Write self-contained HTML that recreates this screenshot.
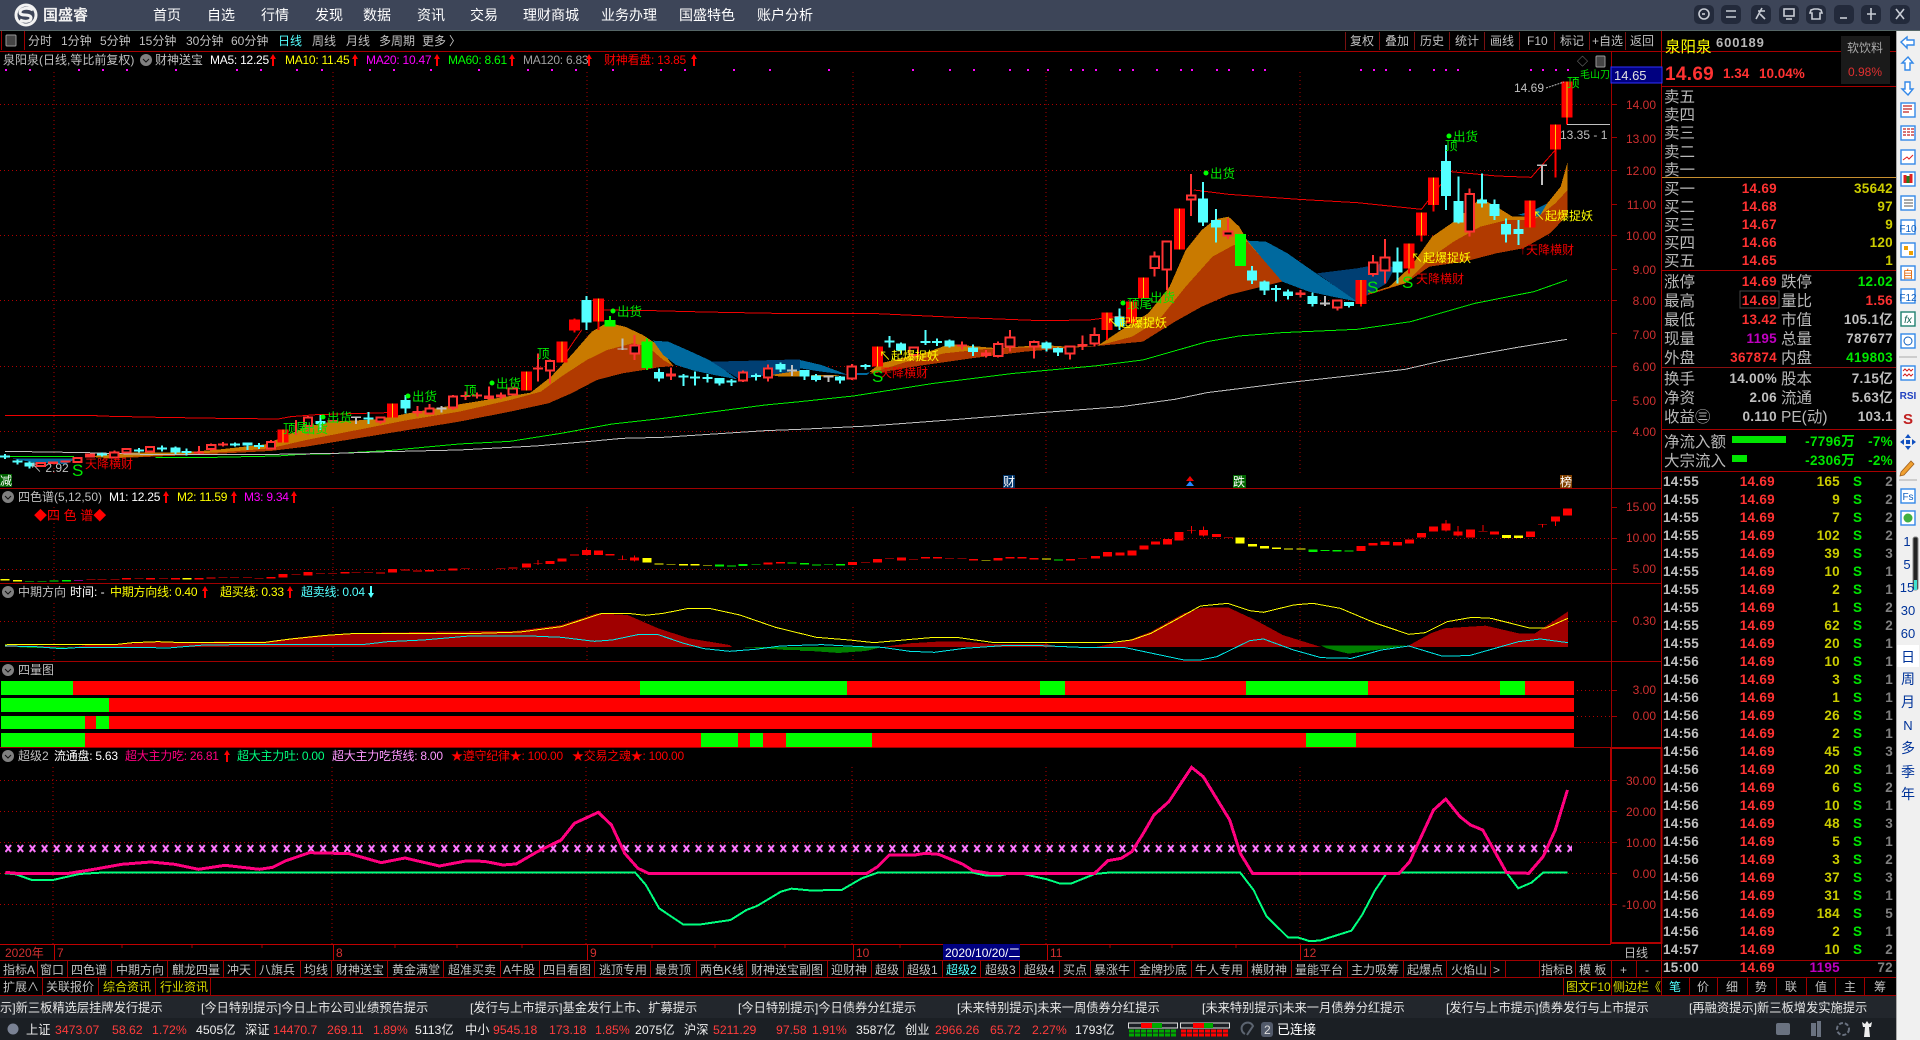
<!DOCTYPE html>
<html lang="zh"><head><meta charset="utf-8"><title>国盛睿</title>
<style>
html,body{margin:0;padding:0;background:#000;width:1920px;height:1040px;overflow:hidden}
svg{display:block;position:absolute;left:0;top:0}
text{font-family:"Liberation Sans","WenQuanYi Zen Hei","Noto Sans CJK SC",sans-serif;font-size:12px;fill:#c0c0c0;white-space:pre}
.n path,.n polyline,.n polygon{vector-effect:non-scaling-stroke;shape-rendering:crispEdges}
.b text{font-weight:bold;font-size:13.5px;letter-spacing:.3px}
.e{text-anchor:end}.m{text-anchor:middle}
.w{fill:#fff}.y{fill:#ffff00}.r{fill:#ff0000}.g{fill:#00ff00}.c{fill:#54ffff}.p{fill:#ff00ff}
.a{fill:#d03030}.la{letter-spacing:-.25px}
.nv text{font-size:14px;fill:#fff}
.l16 text{font-size:15.5px;fill:#b8b8b8;font-weight:normal}
.gl text{fill:#00e800;font-size:12.5px}.yl text{fill:#ffff00;font-size:12px}.rl text{fill:#f00000;font-size:12px}
.sb text{fill:#003399;font-size:14px;text-anchor:middle}
.tk text{fill:#e6e6e6;font-size:12.25px}
.st text{font-size:12.25px;fill:#ff3c3c}
.st .w{fill:#f0f0f0}
.b .pr,.pr{fill:#ff3232}.b .vo{fill:#cccc00}.b .gr{fill:#00e600}.b .mg{fill:#c000c0}.b .ct{fill:#808080}
.yt{fill:#d8d800}
</style></head><body>
<svg width="1920" height="1040" viewBox="0 0 1920 1040">
<defs>
<path id="au" d="M0 -6L-3 -1H-1V6H1V-1H3Z" fill="#ff0000"/>
<path id="ad" d="M0 6L-3 1H-1V-6H1V1H3Z" fill="#54ffff"/>
<pattern id="xp" x="5" y="844" width="12.11" height="9" patternUnits="userSpaceOnUse"><path d="M.5 1L6 8M6 1L.5 8" stroke="#ff77ff" stroke-width="2" fill="none"/></pattern>
</defs>
<rect width="1920" height="1040" fill="#000"/>
<!-- title bar -->
<rect width="1920" height="30" fill="#3d4558"/>
<rect y="30" width="1920" height="1" fill="#566"/>
<circle cx="26" cy="15" r="10" fill="none" stroke="#f2f2f2" stroke-width="3"/>
<path d="M33 10C28 7 20 8 20 12.5C20 17 31 13 31 18C31 22 24 22 20 20" fill="none" stroke="#f2f2f2" stroke-width="3"/>
<text x="43" y="20" style="font-size:15px;font-weight:bold;fill:#f0f0f0">国盛睿</text>
<g class="nv"><text x="153" y="20">首页</text><text x="207" y="20">自选</text><text x="261" y="20">行情</text><text x="315" y="20">发现</text><text x="363" y="20">数据</text><text x="417" y="20">资讯</text><text x="470" y="20">交易</text><text x="523" y="20">理财商城</text><text x="601" y="20">业务办理</text><text x="679" y="20">国盛特色</text><text x="757" y="20">账户分析</text></g>
<!-- window buttons -->
<g fill="#232a3b"><rect x="1694" y="5" width="20" height="19" rx="5"/><rect x="1721" y="5" width="20" height="19" rx="5"/><rect x="1751" y="5" width="20" height="19" rx="5"/><rect x="1779" y="5" width="20" height="19" rx="5"/><rect x="1806" y="5" width="20" height="19" rx="5"/><rect x="1834" y="5" width="20" height="19" rx="5"/><rect x="1861" y="5" width="20" height="19" rx="5"/><rect x="1890" y="5" width="20" height="19" rx="5"/></g>
<g fill="none" stroke="#c8ccd4" stroke-width="1.6"><circle cx="1704" cy="14" r="5"/><path d="M1702 14h3"/><path d="M1726 11h10M1726 17h10"/><path d="M1756 19l6-11M1758 11h7M1760 14l5 5"/><rect x="1784" y="9" width="10" height="7"/><path d="M1786 19h6"/><path d="M1811 10l3-1h4l3 1 1 3h-2v6h-8v-6h-2z"/><path d="M1840 18h7"/><path d="M1871 8v6h-4M1871 14h5M1871 14v6"/><path d="M1896 9l8 10M1904 9l-8 10"/></g>
<!-- toolbar -->
<path d="M1.5 31V50M24.5 31V50" stroke="#a00000"/>
<rect x="6" y="35" width="10" height="11" rx="1" fill="#444" stroke="#999"/>
<g><text x="28" y="45">分时</text><text x="61" y="45">1分钟</text><text x="100" y="45">5分钟</text><text x="139" y="45">15分钟</text><text x="186" y="45">30分钟</text><text x="231" y="45">60分钟</text><text x="278" y="45" class="c">日线</text><text x="312" y="45">周线</text><text x="346" y="45">月线</text><text x="379" y="45">多周期</text><text x="422" y="45">更多</text><text x="449" y="45">〉</text>
<text x="1350" y="45">复权</text><text x="1385" y="45">叠加</text><text x="1420" y="45">历史</text><text x="1455" y="45">统计</text><text x="1490" y="45">画线</text><text x="1527" y="45">F10</text><text x="1560" y="45">标记</text><text x="1592" y="45">+自选</text><text x="1630" y="45">返回</text></g>
<path d="M1345.5 32V50M1379.5 32V50M1414.5 32V50M1449.5 32V50M1484.5 32V50M1519.5 32V50M1554.5 32V50M1589.5 32V50M1625.5 32V50" stroke="#7a1010"/>
<path d="M0 51.5H1896M1661.5 31V978" stroke="#a80000"/>
<!-- info row -->
<text x="3" y="64">泉阳泉(日线,等比前复权)</text>
<circle cx="146" cy="60" r="6" fill="#808080"/><path d="M143 59l3 3 3-3" stroke="#111" fill="none"/>
<text x="155" y="64">财神送宝</text>
<text x="210" y="64" class="w la">MA5: 12.25</text><use href="#au" x="273" y="60"/>
<text x="285" y="64" class="y la">MA10: 11.45</text><use href="#au" x="355" y="60"/>
<text x="366" y="64" class="p la">MA20: 10.47</text><use href="#au" x="437" y="60"/>
<text x="448" y="64" class="g la">MA60: 8.61</text><use href="#au" x="512" y="60"/>
<text x="523" y="64" class="la" style="fill:#a0a0a0">MA120: 6.83</text><use href="#au" x="589" y="60"/>
<text x="604" y="64" class="r la">财神看盘: 13.85</text><use href="#au" x="694" y="60"/>
<text x="1577" y="65" style="fill:#888;font-size:11px">◇</text><rect x="1596" y="56" width="9" height="11" rx="1" fill="#444" stroke="#999"/>
<!-- magenta dots -->
<path d="M5 70h2M29 70h2M78 70h2M102 70h2M126 70h2M175 70h2M236 70h2M260 70h2M296 70h2M321 70h2M369 70h2M393 70h2M430 70h2M478 70h2M527 70h2M551 70h2M575 70h2M612 70h2M660 70h2M684 70h2M733 70h2M769 70h2M828 70h2M912 70h2M949 70h2M973 70h2M1009 70h2M1027 70h2M1047 70h2M1070 70h2M1082 70h2M1095 70h2M1119 70h2M1132 70h2M1156 70h2M1180 70h2M1191 70h2M1216 70h2M1228 70h2M1252 70h2M1264 70h2M1360 70h2M1373 70h2M1385 70h2M1409 70h2M1433 70h2M1445 70h2M1457 70h2M1530 70h2M1542 70h2M1555 70h2M1567 70h2" stroke="#ff00ff" stroke-width="2"/>
<!-- grid -->
<g stroke="#b00000" stroke-dasharray="1 3" fill="none">
<path d="M0 104.5H1611M0 170.5H1611M0 235.5H1611M0 300.5H1611M0 366.5H1611M0 431.5H1611"/>
<path d="M54 72V473M333 72V473M587 72V473M853 72V473M1046 72V473M1300 72V473"/>
<path d="M0 538.5H1611M0 569.5H1611M54 507V580M333 507V580M587 507V580M853 507V580M1046 507V580M1300 507V580"/>
<path d="M0 621.5H1611M54 603V660M333 603V660M587 603V660M853 603V660M1046 603V660M1300 603V660"/>
<path d="M1577 690.5H1611M1577 716.5H1611"/>
<path d="M0 780.5H1611M0 811.5H1611M0 842.5H1611M0 873.5H1611M0 904.5H1611M53 767V944M332 767V944M586 767V944M852 767V944M1046 767V944M1300 767V944"/>
</g>
<!-- bands + lines + candles left -->
<g class="n" transform="translate(0 280) scale(.5102 .3333)">
<polygon fill="#00699e" points="20,535 150,535 130,552 70,548"/>
<polygon fill="#c97a00" points="170,530 250,518 350,518 420,510 520,493 560,468 600,440 650,425 740,418 800,400 880,378 960,358 1040,338 1080,290 1120,225 1160,155 1190,128 1225,140 1260,165 1285,190 1320,258 1290,262 1270,268 1220,280 1170,300 1120,340 1075,370 1000,395 900,425 800,450 700,475 600,500 530,513 380,525 220,535"/>
<polygon fill="#b13a00" points="200,535 330,525 450,515 530,505 600,480 700,450 800,420 900,395 1000,360 1060,335 1100,290 1150,240 1190,210 1240,190 1270,200 1300,240 1320,258 1290,262 1270,268 1220,280 1170,300 1120,340 1075,370 1000,395 900,425 800,450 700,475 600,500 530,513 380,525 220,535"/>
<polygon fill="#00699e" points="1280,182 1310,185 1350,212 1390,240 1420,270 1445,298 1400,285 1360,272 1325,255 1300,225"/>
<polygon fill="#003f73" points="1395,245 1450,243 1568,238 1568,275 1510,285 1450,298 1420,270"/>
<polygon fill="#c97a00" points="1510,285 1568,272 1568,290 1530,290"/>
<polyline fill="none" stroke="#00ee00" stroke-width="1" points="20,530 145,530"/>
<polyline fill="none" stroke="#00ee00" stroke-width="1" points="305,532 420,532 545,528 590,523 640,522 710,516 760,512 900,492 1000,484 1100,460 1200,432 1300,415 1400,395 1500,375 1568,365"/>
<polyline fill="none" stroke="#c0c0c0" stroke-width="1" points="10,514 170,518 300,524 500,524 660,520 760,515 900,510 1050,498 1150,485 1220,475 1300,472 1400,462 1500,452 1568,448"/>
<polyline fill="none" stroke="#ee0000" stroke-width="1" points="10,406 190,406 190,408 310,412 430,415 545,417 570,410 620,404 760,398"/>
<polyline fill="none" stroke="#ee0000" stroke-width="1" points="1100,240 1140,150"/>
<polyline fill="none" stroke="#ee0000" stroke-width="1" points="1173,90 1280,92 1380,96 1520,100 1568,101"/>
<path fill="none" stroke="#54ffff" stroke-width="2" d="M10 522V537M34 538V553M58 545V565M200 518V530M272 504V518M318 497V515M344 500V522M366 505V527M461 488V500M485 487V510M508 489V507M628 405V450M722 396V432M795 345V400M1150 48V150M1292 265V305M1340 282V318M1362 275V316M1387 282V308M1410 294V316M1434 297V318M1482 280V302M1530 248V276"/>
<path fill="none" stroke="#54ffff" stroke-width="10" d="M10 526V532M34 542V548M58 548V560M200 521V527M272 508V514M318 503V509M344 502V517M366 513V519M461 491V497M485 487V497M508 495V501M628 423V432M722 413V419M795 360V385M1150 60V128M1292 276V295M1340 287V293M1362 290V296M1387 291V297M1410 294V310M1434 302V308M1482 285V291M1530 252V268"/>
<path fill="none" stroke="#ff3333" stroke-width="2" d="M390 498V522M437 486V500M818 378V410M912 335V360M935 338V355M958 320V358M982 337V357M1054 220V305M1315 262V300M580 420V465"/>
<path fill="none" stroke="#ff3333" stroke-width="10" d="M104 545V552M128 542V548M176 520V532M390 514V521M437 490V496M652 420V428M818 393V400M912 345V351M935 344V350M958 347V357M982 344V352M1054 262V268M1315 280V290"/>
<path fill="#000" stroke="#ff3333" stroke-width="2" d="M72 549H88V558H72ZM144 534H160V546H144ZM216 517H232V532H216ZM224 512V517M224 532V535M240 507H256V517H240ZM286 501H302V515H286ZM406 495H422V507H406ZM414 491V495M414 507V512M523 486H539V505H523ZM531 480V486M531 505V508M596 412H612V438H596ZM604 408V412M604 438V465M738 413H754V424H738ZM746 410V413M746 424V432M834 386H850V400H834ZM842 372V386M842 400V403M880 350H896V382H880ZM888 345V350M888 382V390M997 325H1013V344H997ZM1005 320V325M1005 344V347M1070 243H1086V272H1070ZM1078 238V243M1078 272V310M1236 196H1252V220H1236ZM1244 165V196M1244 220V240M1448 277H1464V302H1448ZM1456 272V277M1456 302V306M1497 266H1513V293H1497ZM1505 254V266M1505 293V305"/>
<path fill="none" stroke="#ff0000" stroke-width="2" d="M1126 115V158M1173 55V150"/>
<path fill="none" stroke="#ff0000" stroke-width="11" d="M555 449V488M769 370V412M1032 275V332M1102 184V248M1126 118V152M1173 55V125"/>
<path fill="none" stroke="#ffcc00" stroke-width="1" d="M555 449V488M769 370V412M1032 275V332M1102 184V248M1173 55V125"/>
<path fill="none" stroke="#00ff00" stroke-width="2" d="M1196 108V140M1268 175V270"/>
<path fill="none" stroke="#00ff00" stroke-width="11" d="M1196 120V140M1268 185V264"/>
<path fill="none" stroke="#c0c0c0" stroke-width="2" d="M698 412V432M865 378V398M1220 175V210M1552 255V288"/>
<path fill="none" stroke="#c0c0c0" stroke-width="10" d="M698 410V414M865 383V389M1220 205V209M1552 269V275"/>
</g>
<!-- bands + lines + candles right -->
<g class="n" transform="translate(800 60) scale(.5357 .3333)">
<polygon fill="#00699e" points="0,900 40,915 90,945 40,935 0,925"/>
<polygon fill="#c97a00" points="20,945 75,945 60,950 30,950"/>
<polygon fill="#00699e" points="105,940 130,938 125,945 105,945"/>
<polygon fill="#c97a00" points="130,935 150,910 240,875 280,852 320,858 370,865 450,855 500,860 555,858 600,810 650,760 690,680 720,570 750,510 775,478 800,470 820,500 835,542 860,590 900,665 850,685 800,705 750,740 700,785 640,845 555,858 520,862 420,875 320,895 220,918 140,940"/>
<polygon fill="#b13a00" points="130,940 200,905 270,880 340,868 420,862 500,862 555,858 620,830 670,780 720,680 770,590 810,555 835,545 860,590 900,665 850,685 800,705 750,740 700,785 640,845 555,858 520,862 420,875 320,895 220,918 140,940"/>
<polygon fill="#003f73" points="965,640 1040,625 1090,610 1110,625 1095,670 1065,700 1040,725 1000,680"/>
<polygon fill="#00699e" points="835,542 870,545 910,580 950,625 1000,680 1040,725 1000,712 950,695 900,665 860,590"/>
<polygon fill="#c97a00" points="1060,700 1100,680 1140,620 1180,530 1225,480 1270,415 1300,440 1330,470 1370,470 1395,430 1420,380 1433,305 1433,465 1400,520 1350,565 1300,580 1240,605 1175,620 1130,670 1060,705"/>
<polygon fill="#b13a00" points="1060,700 1130,670 1180,590 1220,545 1270,500 1320,480 1370,480 1410,430 1433,390 1433,465 1400,520 1350,565 1300,580 1240,605 1175,620 1130,670 1060,705"/>
<polygon fill="#00699e" points="1340,465 1370,450 1395,430 1380,470"/>
<polyline fill="none" stroke="#00ee00" stroke-width="1" points="0,1025 100,1008 250,970 400,940 550,918 640,900 760,845 820,828 900,818 1040,808 1140,785 1260,730 1370,695 1432,660"/>
<polyline fill="none" stroke="#c0c0c0" stroke-width="1" points="0,1108 130,1098 280,1080 450,1058 600,1040 700,1018 760,998 900,970 1040,945 1130,928 1200,902 1340,862 1432,838"/>
<polyline fill="none" stroke="#ee0000" stroke-width="1" points="0,760 130,760 290,772 450,782 540,780 600,768"/>
<polyline fill="none" stroke="#ee0000" stroke-width="1" points="735,390 800,403 930,418 1040,428 1160,448 1215,335 1300,348 1365,352 1410,270"/>
<path fill="none" stroke="#54ffff" stroke-width="2" d="M8 930V960M30 942V965M75 948V970M122 912V928M167 828V862M189 848V880M234 810V855M256 835V858M279 838V862M323 853V888M460 845V875M482 862V888M596 745V810M752 366V498M777 447V548M844 618V672M867 662V705M889 675V725M911 688V718M957 697V740M1025 726V742M1115 562V670M1206 255V450M1229 350V490M1273 340V442M1296 418V480M1318 475V548M1341 480V555"/>
<path fill="none" stroke="#54ffff" stroke-width="10" d="M8 930V950M30 946V960M75 950V962M122 915V921M167 842V848M189 850V872M234 843V849M256 843V849M279 842V860M323 862V876M460 848V866M482 864V878M596 770V800M752 415V488M777 480V503M844 632V662M867 665V692M889 684V690M911 695V708M957 708V732M1025 726V738M1115 604V638M1206 303V408M1229 423V487M1273 418V430M1296 432V468M1318 492V524M1341 507V522"/>
<path fill="none" stroke="#c0c0c0" stroke-width="2" d="M53 946V966M980 708V738M1385 315V375"/>
<path fill="none" stroke="#c0c0c0" stroke-width="10" d="M53 947V953M980 728V734M1385 313V318"/>
<path fill="none" stroke="#ff3333" stroke-width="2" d="M302 845V868M347 870V892M527 827V870M934 690V712"/>
<path fill="none" stroke="#ff3333" stroke-width="10" d="M302 854V860M347 877V888M527 852V860M934 697V705"/>
<path fill="#000" stroke="#ff3333" stroke-width="2" d="M89 920H105V955H89ZM97 912V920M97 955V960M204 862H220V885H204ZM212 885V893M362 852H378V888H362ZM370 845V852M370 888V892M384 832H400V860H384ZM392 810V832M392 860V875M429 846H445V860H429ZM437 842V846M437 860V895M496 860H512V880H496ZM504 858V860M504 880V898M542 825H558V850H542ZM550 802V825M550 850V860M654 590H670V624H654ZM662 574V590M662 624V650M677 545H693V628H677ZM685 628V690M722 406H738V418H722ZM730 342V406M730 418V468M791 515H807V526H791ZM799 475V515M799 526V537M995 722H1011V742H995ZM1003 718V722M1003 742V752M1062 608H1078V642H1062ZM1070 585V608M1070 642V650M1084 592H1100V632H1084ZM1092 537V592M1092 632V670M1242 402H1258V515H1242ZM1250 385V402M1250 515V530"/>
<path fill="none" stroke="#ff0000" stroke-width="2" d="M573 758V840M1047 660V740M1137 550V640M1160 458V545M1183 352V455M1410 193V352M1432 65V193"/>
<path fill="none" stroke="#ff0000" stroke-width="11" d="M145 860V920M573 758V810M619 725V790M641 653V716M708 445V568M1047 660V732M1137 550V625M1160 458V527M1183 352V435M1363 422V502M1410 193V268M1432 65V173"/>
<path fill="none" stroke="#ffcc00" stroke-width="1" d="M145 860V920M573 758V810M619 725V790M641 653V716M708 445V568M1047 660V732M1137 550V625M1160 458V527M1183 352V435M1363 422V502M1410 193V268M1432 65V173"/>
<path fill="none" stroke="#00ff00" stroke-width="11" d="M822 522V618"/>
</g>
<!-- chart labels -->
<g class="gl">
<circle cx="613" cy="311" r="2.5" fill="#0f0"/><text x="617" y="316">出货</text>
<circle cx="492" cy="383" r="2.5" fill="#0f0"/><text x="496" y="388">出货</text>
<circle cx="408" cy="396" r="2.5" fill="#0f0"/><text x="412" y="401">出货</text>
<circle cx="323" cy="417" r="2.5" fill="#0f0"/><text x="327" y="422">出货</text>
<text x="537" y="358">顶</text><text x="464" y="395">顶</text><text x="283" y="433">顶</text><text x="296" y="432">尾</text><text x="303" y="433">出货</text>
<circle cx="1206" cy="173" r="2.5" fill="#0f0"/><text x="1210" y="178">出货</text>
<circle cx="1449" cy="136" r="2.5" fill="#0f0"/><text x="1453" y="141">出货</text>
<text x="1445" y="150">顶</text>
<text x="1567" y="87">顶</text><text x="1580" y="78" style="font-size:10px">毛山刀</text>
<circle cx="1123" cy="303" r="2.5" fill="#0f0"/><text x="1127" y="308">顶尾</text><text x="1150" y="302">出货</text>
</g>
<g class="yl"><text x="879" y="360">↖起爆捉妖</text><text x="1107" y="327">↖起爆捉妖</text><text x="1411" y="262">↖起爆捉妖</text><text x="1533" y="220">↖起爆捉妖</text></g>
<g class="rl"><text x="85" y="468">天降横财</text><text x="880" y="377">天降横财</text><text x="1416" y="283">天降横财</text><text x="1520" y="254">↑天降横财</text></g>
<g><text x="72" y="476" style="font-size:17px;fill:#00e800">S</text><text x="872" y="382" style="font-size:17px;fill:#00e800">S</text><text x="1367" y="293" style="font-size:17px;fill:#00e800">S</text><text x="1402" y="288" style="font-size:17px;fill:#00e800">S</text></g>
<text x="30" y="472">↖ 2.92</text>
<text x="1514" y="92">14.69</text><path d="M1546 88L1564 82" stroke="#c0c0c0" stroke-dasharray="2 1"/>
<path d="M1567 124.5H1610" stroke="#c0c0c0"/><text x="1560" y="139">13.35 - 1</text>
<rect x="0" y="474" width="12" height="13" fill="#006000"/><text x="0" y="485" class="w">减</text>
<rect x="1003" y="475" width="12" height="13" fill="#003366"/><text x="1003" y="486" class="w">财</text>
<rect x="1233" y="475" width="13" height="13" fill="#006600"/><text x="1233" y="486" class="w">跌</text>
<rect x="1560" y="475" width="12" height="13" fill="#804000"/><text x="1560" y="486" class="w">榜</text>
<path d="M1190 476l4 5h-8z" fill="#f00000"/><path d="M1190 481l4 5h-8z" fill="#2288ff"/>
<!-- separators -->
<path d="M0 488.5H1661M0 583.5H1661M0 661.5H1661M0 747.5H1611" stroke="#a00000"/>
<path d="M1611.5 52V748" stroke="#a00000"/>
<rect x="1611" y="67" width="51" height="16" fill="#000080" stroke="#3030ff"/><text x="1614" y="80" style="fill:#e0e0e0;font-size:13px">14.65</text>
<!-- axis -->
<path d="M1611 104.5h6M1611 137.5h6M1611 170.5h6M1611 204.5h6M1611 235.5h6M1611 269.5h6M1611 300.5h6M1611 333.5h6M1611 366.5h6M1611 400.5h6M1611 431.5h6M1611 507.5h6M1611 538.5h6M1611 569.5h6M1611 621.5h6M1611 690.5h6M1611 716.5h6M1611 780.5h6M1611 811.5h6M1611 842.5h6M1611 873.5h6M1611 904.5h6" stroke="#a00000"/>
<g>
<text x="1656" y="109" class="a e">14.00</text><text x="1656" y="143" class="a e">13.00</text><text x="1656" y="175" class="a e">12.00</text><text x="1656" y="209" class="a e">11.00</text><text x="1656" y="240" class="a e">10.00</text><text x="1656" y="274" class="a e">9.00</text><text x="1656" y="305" class="a e">8.00</text><text x="1656" y="339" class="a e">7.00</text><text x="1656" y="371" class="a e">6.00</text><text x="1656" y="405" class="a e">5.00</text><text x="1656" y="436" class="a e">4.00</text>
<text x="1656" y="511" class="a e">15.00</text><text x="1656" y="542" class="a e">10.00</text><text x="1656" y="573" class="a e">5.00</text><text x="1656" y="625" class="a e">0.30</text><text x="1656" y="694" class="a e">3.00</text><text x="1656" y="720" class="a e">0.00</text>
<text x="1656" y="785" class="a e">30.00</text><text x="1656" y="816" class="a e">20.00</text><text x="1656" y="847" class="a e">10.00</text><text x="1656" y="878" class="a e">0.00</text><text x="1656" y="909" class="a e">-10.00</text>
</g>
<!-- panel 2 -->
<circle cx="8" cy="497" r="6" fill="#808080"/><path d="M5 496l3 3 3-3" stroke="#111" fill="none"/>
<text x="18" y="501">四色谱(5,12,50)</text><text x="109" y="501" class="w la">M1: 12.25</text><use href="#au" x="166" y="497"/><text x="177" y="501" class="y la">M2: 11.59</text><use href="#au" x="234" y="497"/><text x="244" y="501" class="p la">M3: 9.34</text><use href="#au" x="294" y="497"/>
<text x="34" y="520" class="r" style="font-size:13px">◆四 色 谱◆</text>
<g class="n" transform="translate(0 490) scale(.5102 .3333)">
<path fill="none" stroke="#ffff00" stroke-width="9" d="M10 267V272M34 270V275M367 264V269M1268 204V218M1292 220V224M1315 222V224M1340 222V227M1362 222V227M1387 225V227"/>
<path fill="none" stroke="#00ee00" stroke-width="9" d="M58 273V275M82 273V275M106 272V274M130 270V275M1410 223V230M1434 226V230M1456 222V228M1482 224V225M1552 218V220"/>
<path fill="none" stroke="#ff00ff" stroke-width="9" d="M154 270V272"/>
<path fill="none" stroke="#ff0000" stroke-width="9" d="M178 267V269M200 267V269M225 267V269M248 264V269M272 265V267M295 264V268M320 265V267M344 264V268M390 264V268M414 262V265M437 262V264M460 262V264M485 262V264M508 264V266M531 261V266M555 252V263M580 252V254M604 246V257M628 249V251M652 249V251M676 246V250M698 247V249M722 247V249M746 247V250M769 237V248M795 238V242M818 242V244M842 240V245M865 240V242M888 236V242M912 235V237M935 235V236M958 235V236M982 234V236M1005 232V236M1032 220V233M1054 220V222M1078 213V222M1102 205V215M1126 193V197M1150 180V195M1173 181V195M1196 192V197M1220 207V208M1244 203V212M1505 218V223M1530 216V220"/>
<path fill="none" stroke="#ff0000" stroke-width="1" d="M1054 210V225M1150 175V195M1220 197V210M1244 197V214"/>
</g>
<g class="n" transform="translate(800 490) scale(.5485 .3333)">
<path fill="none" stroke="#00ee00" stroke-width="9" d="M8 219V224M30 223V227M52 222V224M74 222V227M471 208V212M935 178V186M957 180V183M979 180V185M1001 181V185"/>
<path fill="none" stroke="#ffff00" stroke-width="9" d="M339 210V212M449 205V209M802 142V161M825 162V170M847 168V176M869 172V177M891 175V179M913 175V179M1288 135V144M1310 136V144"/>
<path fill="none" stroke="#ff0000" stroke-width="9" d="M96 216V225M119 216V218M141 207V218M163 204V206M185 203V212M207 207V209M229 201V206M251 201V206M273 204V206M295 204V206M316 207V212M361 204V212M383 201V206M405 201V205M427 204V208M493 207V212M515 204V205M539 198V206M561 186V200M583 188V197M605 181V197M627 166V178M648 155V164M670 147V164M691 126V152M714 120V122M736 120V137M759 132V141M781 141V143M1023 168V183M1045 159V167M1067 155V165M1089 156V167M1111 148V161M1133 129V143M1155 109V125M1178 100V122M1200 124V137M1222 118V143M1245 123V125M1266 124V134M1332 124V141M1354 102V104M1377 79V94M1399 55V77"/>
<path fill="none" stroke="#ff0000" stroke-width="1" d="M714 108V130M736 110V140M1178 90V125M1200 108V140M1245 105V125M1377 94V108M1354 104V113"/>
</g>
<!-- panel 3 -->
<circle cx="8" cy="592" r="6" fill="#808080"/><path d="M5 591l3 3 3-3" stroke="#111" fill="none"/>
<text x="18" y="596">中期方向</text><text x="70" y="596" class="w">时间: -</text><text x="110" y="596" class="y la">中期方向线: 0.40</text><use href="#au" x="205" y="592"/><text x="220" y="596" class="y la">超买线: 0.33</text><use href="#au" x="290" y="592"/><text x="301" y="596" class="c la">超卖线: 0.04</text><use href="#ad" x="371" y="592"/>
<g class="n" transform="translate(0 490) scale(.5102 .3333)">
<polygon fill="#a00000" points="10,471 10,465 150,470 170,465 235,462 310,456 360,457 430,455 520,455 570,445 610,438 680,430 760,428 900,424 1010,423 1100,405 1170,370 1230,375 1290,415 1350,445 1430,465 1435,471"/>
<polygon fill="#008000" points="1430,471 1568,471 1568,480 1540,480 1500,475 1450,471"/>
<polygon fill="#008000" points="30,471 150,471 120,474 60,474"/>
<polyline fill="none" stroke="#ffff00" stroke-width="1" points="10,465 20,463 230,463 260,458 310,455 360,458 520,457 570,447 640,436 690,431 920,431 1020,426 1100,410 1180,370 1230,370 1265,376 1300,370 1350,355 1390,355 1450,375 1520,412 1568,430"/>
<polyline fill="none" stroke="#00e8e8" stroke-width="1" points="10,468 70,470 120,476 160,472 260,472 330,474 400,465 470,464 710,464 760,455 830,450 920,438 1040,438 1100,442 1165,454 1200,450 1250,434 1290,434 1340,460 1380,476 1430,484 1480,478 1530,468 1568,466"/>
</g>
<g class="n" transform="translate(800 490) scale(.5485 .3333)">
<polygon fill="#a00000" points="150,471 200,460 250,455 300,455 350,462 450,462 470,471"/>
<polygon fill="#a00000" points="540,471 600,450 640,425 700,370 735,352 780,352 830,390 880,435 950,471"/>
<polygon fill="#a00000" points="1105,471 1150,430 1175,415 1250,407 1310,430 1340,430 1400,365 1400,471"/>
<polygon fill="#008000" points="0,471 150,471 120,483 70,489 20,483 0,483"/>
<polygon fill="#008000" points="950,467 1105,467 1050,480 1000,491 960,475"/>
<polyline fill="none" stroke="#ffff00" stroke-width="1" points="0,430 30,442 90,450 135,458 210,447 245,442 285,442 350,457 570,457 605,450 640,430 690,385 730,348 780,340 820,362 845,367 900,345 935,340 985,355 1050,400 1110,433 1140,428 1180,395 1225,382 1260,385 1330,414 1360,414 1400,385"/>
<polyline fill="none" stroke="#00e8e8" stroke-width="1" points="0,466 40,464 110,470 150,472 200,484 245,487 300,475 370,467 440,467 510,472 590,472 700,510 730,510 760,500 820,452 845,447 900,480 950,503 1005,505 1060,480 1110,468 1170,498 1220,497 1310,455 1350,447 1400,458"/>
</g>
<!-- panel 4 -->
<circle cx="8" cy="670" r="6" fill="#808080"/><path d="M5 669l3 3 3-3" stroke="#111" fill="none"/>
<text x="18" y="674">四量图</text>
<g fill="#ff0000"><rect x="1" y="681" width="1573" height="14"/><rect x="1" y="698" width="1573" height="14"/><rect x="1" y="716" width="1573" height="13"/><rect x="1" y="733" width="1573" height="14"/></g>
<g fill="#00ff00"><rect x="1" y="681" width="72" height="14"/><rect x="640" y="681" width="207" height="14"/><rect x="1040" y="681" width="25" height="14"/><rect x="1246" y="681" width="122" height="14"/><rect x="1500" y="681" width="25" height="14"/>
<rect x="1" y="698" width="108" height="14"/>
<rect x="1" y="716" width="84" height="13"/><rect x="96" y="716" width="13" height="13"/>
<rect x="1" y="733" width="84" height="14"/><rect x="701" y="733" width="37" height="14"/><rect x="750" y="733" width="13" height="14"/><rect x="786" y="733" width="86" height="14"/><rect x="1306" y="733" width="50" height="14"/></g>
<!-- panel 5 -->
<circle cx="8" cy="756" r="6" fill="#808080"/><path d="M5 755l3 3 3-3" stroke="#111" fill="none"/>
<text x="18" y="760">超级2</text><text x="54" y="760" class="w la">流通盘: 5.63</text><text x="125" y="760" class="la" style="fill:#ff0080">超大主力吃: 26.81</text><use href="#au" x="227" y="756"/><text x="237" y="760" class="la" style="fill:#00ff7f">超大主力吐: 0.00</text><text x="332" y="760" class="la" style="fill:#ff99ff">超大主力吃货线: 8.00</text><text x="451" y="760" class="r la">★遵守纪律★: 100.00</text><text x="572" y="760" class="r la">★交易之魂★: 100.00</text>
<rect x="2" y="844" width="1570" height="9" fill="url(#xp)"/>
<g class="n" transform="translate(0 740) scale(.5294 .3333)">
<polyline fill="none" stroke="#00ff7f" stroke-width="2" points="10,400 30,403 60,420 100,420 150,402 190,398 1200,398 1220,435 1245,505 1290,553 1320,554 1380,540 1410,510 1430,498 1475,455 1495,446 1535,452 1568,450"/>
<polyline fill="none" stroke="#ff007f" stroke-width="3" points="10,397 30,400 130,400 170,390 230,373 285,366 330,373 375,388 425,376 490,388 515,382 540,362 585,338 660,341 720,368 765,354 830,378 880,363 915,364 950,375 975,372 1015,335 1060,300 1085,250 1130,217 1155,255 1180,340 1205,385 1225,400 1568,400"/>
</g>
<g class="n" transform="translate(830 740) scale(.5294 .3333)">
<polyline fill="none" stroke="#00ff7f" stroke-width="2" points="0,450 22,450 60,415 90,398 270,398 295,407 320,407 340,400 365,402 410,418 435,431 455,431 500,402 525,398 775,398 800,450 825,530 865,592 885,593 905,603 925,602 985,572 1005,525 1030,450 1050,403 1075,398 1278,398 1300,445 1325,428 1347,398 1393,398"/>
<polyline fill="none" stroke="#ff007f" stroke-width="3" points="0,400 70,400 90,380 112,345 160,345 180,340 205,343 250,372 270,392 300,400 500,400 525,362 550,355 570,335 590,285 612,225 640,185 683,82 705,110 755,240 775,340 798,400 1075,400 1095,365 1140,210 1163,177 1190,230 1210,255 1233,270 1278,398 1320,400 1347,350 1370,270 1393,150"/>
</g>
<rect x="1611" y="748" width="50.5" height="195" fill="none" stroke="#b00000" stroke-width="2"/>
<path d="M0 944.5H1611" stroke="#c00000"/>
<!-- date axis -->
<path d="M0 960.5H1896" stroke="#a00000"/>
<path d="M54.5 945V960M333.5 945V960M587.5 945V960M853.5 945V960M1047.5 945V960M1300.5 945V960" stroke="#c00000"/>
<path d="M122 945v3M192 945v3M262 945v3M395 945v3M457 945v3M522 945v3M652 945v3M715 945v3M785 945v3M900 945v3M1110 945v3M1172 945v3M1236 945v3" stroke="#a00000"/>
<rect x="943" y="944" width="77" height="16" fill="#000080"/>
<g><text x="5" y="957" class="a">2020年</text><text x="57" y="957" class="a">7</text><text x="336" y="957" class="a">8</text><text x="590" y="957" class="a">9</text><text x="856" y="957" class="a">10</text><text x="1050" y="957" class="a">11</text><text x="1303" y="957" class="a">12</text>
<text x="945" y="957" class="w">2020/10/20/二</text><text x="1624" y="957">日线</text></g>
<!-- tab row 1 -->
<path d="M0 977.5H1896M37.5 961V977M67.5 961V977M111.5 961V977M167.5 961V977M223.5 961V977M255.5 961V977M300.5 961V977M331.5 961V977M387.5 961V977M443.5 961V977M500.5 961V977M539.5 961V977M594.5 961V977M650.5 961V977M696.5 961V977M746.5 961V977M827.5 961V977M871.5 961V977M903.5 961V977M942.5 961V977M980.5 961V977M1019.5 961V977M1059.5 961V977M1090.5 961V977M1134.5 961V977M1191.5 961V977M1247.5 961V977M1291.5 961V977M1347.5 961V977M1403.5 961V977M1446.5 961V977M1490.5 961V977M1505.5 961V977M1539.5 961V977M1575.5 961V977M1611.5 961V977M1636.5 961V977M1661.5 961V977" stroke="#a00000"/>
<g><text x="3" y="974">指标A</text><text x="40" y="974">窗口</text><text x="71" y="974">四色谱</text><text x="116" y="974">中期方向</text><text x="172" y="974">麒龙四量</text><text x="227" y="974">冲天</text><text x="259" y="974">八旗兵</text><text x="304" y="974">均线</text><text x="336" y="974">财神送宝</text><text x="392" y="974">黄金满堂</text><text x="448" y="974">超准买卖</text><text x="503" y="974">A牛股</text><text x="543" y="974">四目看图</text><text x="599" y="974">逃顶专用</text><text x="655" y="974">最贵顶</text><text x="700" y="974">两色K线</text><text x="751" y="974">财神送宝副图</text><text x="831" y="974">迎财神</text><text x="875" y="974">超级</text><text x="907" y="974">超级1</text><text x="946" y="974" class="c">超级2</text><text x="985" y="974">超级3</text><text x="1024" y="974">超级4</text><text x="1063" y="974">买点</text><text x="1094" y="974">暴涨牛</text><text x="1139" y="974">金牌抄底</text><text x="1195" y="974">牛人专用</text><text x="1251" y="974">横财神</text><text x="1295" y="974">量能平台</text><text x="1351" y="974">主力吸筹</text><text x="1407" y="974">起爆点</text><text x="1451" y="974">火焰山</text><text x="1493" y="974">&gt;</text><text x="1541" y="974">指标B</text><text x="1579" y="974">模 板</text><text x="1620" y="974">+</text><text x="1645" y="974">-</text></g>
<!-- tab row 2 -->
<path d="M0 995.5H1896M42.5 978V995M98.5 978V995M155.5 978V995M210.5 978V995M1563.5 978V995M1611.5 978V995M1661.5 978V995M1689.5 978V995M1717.5 978V995M1747.5 978V995M1776.5 978V995M1806.5 978V995M1835.5 978V995M1864.5 978V995" stroke="#a00000"/>
<g><text x="3" y="991">扩展∧</text><text x="46" y="991">关联报价</text><text x="103" y="991" class="yt">综合资讯</text><text x="160" y="991" class="yt">行业资讯</text><text x="1566" y="991" class="yt">图文F10</text><text x="1613" y="991" class="yt">侧边栏《</text><text x="1669" y="991" class="c">笔</text><text x="1697" y="991">价</text><text x="1726" y="991">细</text><text x="1755" y="991">势</text><text x="1785" y="991">联</text><text x="1815" y="991">值</text><text x="1844" y="991">主</text><text x="1874" y="991">筹</text></g>
<!-- ticker -->
<rect y="996" width="1896" height="22" fill="#22262c"/>
<g class="tk"><text x="0" y="1012">示]新三板精选层挂牌发行提示</text><text x="201" y="1012">[今日特别提示]今日上市公司业绩预告提示</text><text x="470" y="1012">[发行与上市提示]基金发行上市、扩募提示</text><text x="738" y="1012">[今日特别提示]今日债券分红提示</text><text x="957" y="1012">[未来特别提示]未来一周债券分红提示</text><text x="1202" y="1012">[未来特别提示]未来一月债券分红提示</text><text x="1446" y="1012">[发行与上市提示]债券发行与上市提示</text><text x="1689" y="1012">[再融资提示]新三板增发实施提示</text></g>
<!-- status -->
<rect y="1018" width="1896" height="22" fill="#1b1f24"/>
<circle cx="13" cy="1029" r="5.5" fill="#7a8294"/>
<g class="st"><text x="26" y="1034" class="w">上证</text><text x="55" y="1034">3473.07</text><text x="112" y="1034">58.62</text><text x="152" y="1034">1.72%</text><text x="196" y="1034" class="w">4505亿</text><text x="245" y="1034" class="w">深证</text><text x="273" y="1034">14470.7</text><text x="327" y="1034">269.11</text><text x="373" y="1034">1.89%</text><text x="415" y="1034" class="w">5113亿</text><text x="465" y="1034" class="w">中小</text><text x="493" y="1034">9545.18</text><text x="549" y="1034">173.18</text><text x="595" y="1034">1.85%</text><text x="635" y="1034" class="w">2075亿</text><text x="684" y="1034" class="w">沪深</text><text x="713" y="1034">5211.29</text><text x="776" y="1034">97.58</text><text x="812" y="1034">1.91%</text><text x="856" y="1034" class="w">3587亿</text><text x="905" y="1034" class="w">创业</text><text x="935" y="1034">2966.26</text><text x="990" y="1034">65.72</text><text x="1032" y="1034">2.27%</text><text x="1075" y="1034" class="w">1793亿</text></g>
<g fill="none" stroke="#ddd"><rect x="1128.5" y="1023" width="49" height="5"/><rect x="1180.5" y="1023" width="49" height="5"/></g>
<rect x="1141" y="1023" width="11" height="5" fill="#f00"/><rect x="1152" y="1023" width="10" height="5" fill="#0a0"/><rect x="1193" y="1023" width="11" height="5" fill="#f00"/><rect x="1204" y="1023" width="9" height="5" fill="#0a0"/>
<path d="M1129 1031h48M1129 1035h48" stroke="#0a0" stroke-width="3" stroke-dasharray="5 1"/><path d="M1181 1031h48M1181 1035h48" stroke="#f00" stroke-width="3" stroke-dasharray="5 1"/>
<path d="M1245 1034a6 6 0 1 1 8-8l-6 9" fill="none" stroke="#5c6470" stroke-width="2"/>
<rect x="1261" y="1022" width="12" height="15" rx="3" fill="#525a6a"/><text x="1264" y="1034" style="fill:#ddd">2</text><text x="1277" y="1034" style="fill:#fff;font-size:13px">已连接</text>
<g fill="#6a7280"><rect x="1776" y="1023" width="14" height="12" rx="2"/><rect x="1811" y="1023" width="5" height="13"/><rect x="1817" y="1021" width="4" height="16"/></g>
<circle cx="1843" cy="1029" r="6" fill="none" stroke="#6a7280" stroke-width="2" stroke-dasharray="4 2"/>
<path d="M1862 1022l3 2 2-3 2 3 3-2-1 5h-2l1 10h-6l1-10h-2z" fill="#eee"/>
<!-- right panel head -->
<text x="1665" y="52" style="font-size:15.5px;fill:#ffff00">泉阳泉</text>
<text x="1716" y="47" style="font-size:13px;font-weight:bold;fill:#b8b8b8;letter-spacing:.9px">600189</text>
<rect x="1841" y="36" width="49" height="48" fill="#1a1a1a"/>
<text x="1865" y="52" class="m" style="fill:#a8a8a8">软饮料</text><text x="1865" y="76" class="m" style="fill:#e03030">0.98%</text>
<text x="1665" y="80" class="pr" style="font-size:19px;font-weight:bold;letter-spacing:.3px">14.69</text>
<text x="1723" y="78" class="pr" style="font-size:13.5px;font-weight:bold">1.34</text><text x="1759" y="78" class="pr" style="font-size:13.5px;font-weight:bold">10.04%</text>
<path d="M1662 86.5H1896M1662 270.5H1896M1662 429.5H1896M1662 471.5H1896" stroke="#a80000"/><path d="M1662 177.5H1896" stroke="#c89030"/><path d="M1662 367.5H1896" stroke="#8a1010"/>
<g class="l16">
<text x="1664" y="102">卖五</text><text x="1664" y="120">卖四</text><text x="1664" y="138">卖三</text><text x="1664" y="157">卖二</text><text x="1664" y="175">卖一</text>
<text x="1664" y="194">买一</text><text x="1664" y="212">买二</text><text x="1664" y="230">买三</text><text x="1664" y="248">买四</text><text x="1664" y="266">买五</text>
<text x="1664" y="287">涨停</text><text x="1664" y="306">最高</text><text x="1664" y="325">最低</text><text x="1664" y="344">现量</text><text x="1664" y="363">外盘</text>
<text x="1781" y="287">跌停</text><text x="1781" y="306">量比</text><text x="1781" y="325">市值</text><text x="1781" y="344">总量</text><text x="1781" y="363">内盘</text>
<text x="1664" y="384">换手</text><text x="1664" y="403">净资</text><text x="1664" y="422">收益㊂</text>
<text x="1781" y="384">股本</text><text x="1781" y="403">流通</text><text x="1781" y="422">PE(动)</text>
<text x="1664" y="447">净流入额</text><text x="1664" y="466">大宗流入</text>
</g>
<rect x="1740" y="291" width="39" height="17" fill="none" stroke="#444"/>
<rect x="1732" y="436" width="54" height="7" fill="#00e600"/><rect x="1732" y="455" width="15" height="7" fill="#00e600"/>
<g class="b">
<g style="text-anchor:end">
<text x="1777" y="193" class="pr">14.69</text><text x="1777" y="211" class="pr">14.68</text><text x="1777" y="229" class="pr">14.67</text><text x="1777" y="247" class="pr">14.66</text><text x="1777" y="265" class="pr">14.65</text>
<text x="1893" y="193" class="vo">35642</text><text x="1893" y="211" class="vo">97</text><text x="1893" y="229" class="vo">9</text><text x="1893" y="247" class="vo">120</text><text x="1893" y="265" class="vo">1</text>
<text x="1777" y="286" class="pr">14.69</text><text x="1777" y="305" class="pr">14.69</text><text x="1777" y="324" class="pr">13.42</text><text x="1777" y="343" class="mg">1195</text><text x="1777" y="362" class="pr">367874</text>
<text x="1893" y="286" class="gr">12.02</text><text x="1893" y="305" class="pr">1.56</text><text x="1893" y="324">105.1亿</text><text x="1893" y="343">787677</text><text x="1893" y="362" class="gr">419803</text>
<text x="1777" y="383">14.00%</text><text x="1777" y="402">2.06</text><text x="1777" y="421">0.110</text>
<text x="1893" y="383">7.15亿</text><text x="1893" y="402">5.63亿</text><text x="1893" y="421">103.1</text>
<text x="1855" y="446" class="gr">-7796万</text><text x="1893" y="446" class="gr">-7%</text>
<text x="1855" y="465" class="gr">-2306万</text><text x="1893" y="465" class="gr">-2%</text>
</g>
</g>
<!-- ticks -->
<g class="b">
<g><text x="1663" y="486">14:55</text><text x="1663" y="504">14:55</text><text x="1663" y="522">14:55</text><text x="1663" y="540">14:55</text><text x="1663" y="558">14:55</text><text x="1663" y="576">14:55</text><text x="1663" y="594">14:55</text><text x="1663" y="612">14:55</text><text x="1663" y="630">14:55</text><text x="1663" y="648">14:55</text><text x="1663" y="666">14:56</text><text x="1663" y="684">14:56</text><text x="1663" y="702">14:56</text><text x="1663" y="720">14:56</text><text x="1663" y="738">14:56</text><text x="1663" y="756">14:56</text><text x="1663" y="774">14:56</text><text x="1663" y="792">14:56</text><text x="1663" y="810">14:56</text><text x="1663" y="828">14:56</text><text x="1663" y="846">14:56</text><text x="1663" y="864">14:56</text><text x="1663" y="882">14:56</text><text x="1663" y="900">14:56</text><text x="1663" y="918">14:56</text><text x="1663" y="936">14:56</text><text x="1663" y="954">14:57</text><text x="1663" y="972">15:00</text></g>
<g style="text-anchor:end">
<text x="1775" y="486" class="pr">14.69</text><text x="1775" y="504" class="pr">14.69</text><text x="1775" y="522" class="pr">14.69</text><text x="1775" y="540" class="pr">14.69</text><text x="1775" y="558" class="pr">14.69</text><text x="1775" y="576" class="pr">14.69</text><text x="1775" y="594" class="pr">14.69</text><text x="1775" y="612" class="pr">14.69</text><text x="1775" y="630" class="pr">14.69</text><text x="1775" y="648" class="pr">14.69</text><text x="1775" y="666" class="pr">14.69</text><text x="1775" y="684" class="pr">14.69</text><text x="1775" y="702" class="pr">14.69</text><text x="1775" y="720" class="pr">14.69</text><text x="1775" y="738" class="pr">14.69</text><text x="1775" y="756" class="pr">14.69</text><text x="1775" y="774" class="pr">14.69</text><text x="1775" y="792" class="pr">14.69</text><text x="1775" y="810" class="pr">14.69</text><text x="1775" y="828" class="pr">14.69</text><text x="1775" y="846" class="pr">14.69</text><text x="1775" y="864" class="pr">14.69</text><text x="1775" y="882" class="pr">14.69</text><text x="1775" y="900" class="pr">14.69</text><text x="1775" y="918" class="pr">14.69</text><text x="1775" y="936" class="pr">14.69</text><text x="1775" y="954" class="pr">14.69</text><text x="1775" y="972" class="pr">14.69</text>
<text x="1840" y="486" class="vo">165</text><text x="1840" y="504" class="vo">9</text><text x="1840" y="522" class="vo">7</text><text x="1840" y="540" class="vo">102</text><text x="1840" y="558" class="vo">39</text><text x="1840" y="576" class="vo">10</text><text x="1840" y="594" class="vo">2</text><text x="1840" y="612" class="vo">1</text><text x="1840" y="630" class="vo">62</text><text x="1840" y="648" class="vo">20</text><text x="1840" y="666" class="vo">10</text><text x="1840" y="684" class="vo">3</text><text x="1840" y="702" class="vo">1</text><text x="1840" y="720" class="vo">26</text><text x="1840" y="738" class="vo">2</text><text x="1840" y="756" class="vo">45</text><text x="1840" y="774" class="vo">20</text><text x="1840" y="792" class="vo">6</text><text x="1840" y="810" class="vo">10</text><text x="1840" y="828" class="vo">48</text><text x="1840" y="846" class="vo">5</text><text x="1840" y="864" class="vo">3</text><text x="1840" y="882" class="vo">37</text><text x="1840" y="900" class="vo">31</text><text x="1840" y="918" class="vo">184</text><text x="1840" y="936" class="vo">2</text><text x="1840" y="954" class="vo">10</text><text x="1840" y="972" class="mg">1195</text>
<text x="1893" y="486" class="ct">2</text><text x="1893" y="504" class="ct">2</text><text x="1893" y="522" class="ct">2</text><text x="1893" y="540" class="ct">2</text><text x="1893" y="558" class="ct">3</text><text x="1893" y="576" class="ct">1</text><text x="1893" y="594" class="ct">1</text><text x="1893" y="612" class="ct">2</text><text x="1893" y="630" class="ct">2</text><text x="1893" y="648" class="ct">1</text><text x="1893" y="666" class="ct">1</text><text x="1893" y="684" class="ct">1</text><text x="1893" y="702" class="ct">1</text><text x="1893" y="720" class="ct">1</text><text x="1893" y="738" class="ct">1</text><text x="1893" y="756" class="ct">3</text><text x="1893" y="774" class="ct">1</text><text x="1893" y="792" class="ct">2</text><text x="1893" y="810" class="ct">1</text><text x="1893" y="828" class="ct">3</text><text x="1893" y="846" class="ct">1</text><text x="1893" y="864" class="ct">2</text><text x="1893" y="882" class="ct">3</text><text x="1893" y="900" class="ct">1</text><text x="1893" y="918" class="ct">5</text><text x="1893" y="936" class="ct">1</text><text x="1893" y="954" class="ct">2</text><text x="1893" y="972" class="ct">72</text>
</g>
<g><text x="1853" y="486" class="gr">S</text><text x="1853" y="504" class="gr">S</text><text x="1853" y="522" class="gr">S</text><text x="1853" y="540" class="gr">S</text><text x="1853" y="558" class="gr">S</text><text x="1853" y="576" class="gr">S</text><text x="1853" y="594" class="gr">S</text><text x="1853" y="612" class="gr">S</text><text x="1853" y="630" class="gr">S</text><text x="1853" y="648" class="gr">S</text><text x="1853" y="666" class="gr">S</text><text x="1853" y="684" class="gr">S</text><text x="1853" y="702" class="gr">S</text><text x="1853" y="720" class="gr">S</text><text x="1853" y="738" class="gr">S</text><text x="1853" y="756" class="gr">S</text><text x="1853" y="774" class="gr">S</text><text x="1853" y="792" class="gr">S</text><text x="1853" y="810" class="gr">S</text><text x="1853" y="828" class="gr">S</text><text x="1853" y="846" class="gr">S</text><text x="1853" y="864" class="gr">S</text><text x="1853" y="882" class="gr">S</text><text x="1853" y="900" class="gr">S</text><text x="1853" y="918" class="gr">S</text><text x="1853" y="936" class="gr">S</text><text x="1853" y="954" class="gr">S</text></g>
</g>
<!-- sidebar -->
<rect x="1896" y="31" width="24" height="1009" fill="#f0f0f0"/><rect x="1896" y="31" width="1" height="1009" fill="#a8a8a8"/>
<g fill="#fff" stroke="#3388e8" stroke-width="1.4">
<path d="M1901 42l6-5v3h7v5h-7v3z"/><path d="M1908 57l5 6h-3v7h-5v-7h-3z"/><path d="M1908 95l5-6h-3v-7h-5v7h-3z"/>
<rect x="1901" y="103" width="14" height="14"/><rect x="1901" y="126" width="14" height="14"/><rect x="1901" y="150" width="14" height="14"/><rect x="1901" y="172" width="14" height="14"/><rect x="1901" y="196" width="14" height="14"/><rect x="1901" y="220" width="14" height="14"/><rect x="1901" y="243" width="14" height="14"/><rect x="1901" y="266" width="14" height="14"/><rect x="1901" y="289" width="14" height="14"/><rect x="1901" y="312" width="14" height="14" stroke="#208070"/><rect x="1901" y="334" width="14" height="14"/><rect x="1901" y="366" width="14" height="14"/><rect x="1901" y="489" width="14" height="14"/><rect x="1901" y="511" width="14" height="14"/>
</g>
<path d="M1903 106h9M1903 109h9M1903 112h6M1903 129h3M1907 129h3M1911 129h3M1903 132h3M1907 132h3M1911 132h3M1903 135h3M1907 135h3M1911 135h3" stroke="#c02020" stroke-width="1.2"/><path d="M1903 160l4-3 2 2 4-4" stroke="#e02020" fill="none"/>
<path d="M1905 175v8M1911 174v9" stroke="#e02020" stroke-width="3"/><path d="M1908 176v7" stroke="#208020" stroke-width="3"/>
<path d="M1904 200h9M1904 203h9M1904 206h9" stroke="#555"/>
<text x="1908" y="232" class="m" style="fill:#1060c0;font-size:10px">F10</text><rect x="1904" y="246" width="4" height="4" fill="#f0a000"/><rect x="1909" y="251" width="4" height="4" fill="#f0a000"/>
<text x="1908" y="278" class="m" style="fill:#e06000;font-size:11px">自</text><text x="1908" y="301" class="m" style="fill:#1060c0;font-size:10px">F12</text><text x="1908" y="323" class="m" style="fill:#106050;font-size:10px;font-style:italic">fx</text><circle cx="1908" cy="341" r="4" fill="none" stroke="#1060c0"/>
<path d="M1899 357h18M1899 480h18" stroke="#aaa"/>
<path d="M1903 371l2-2 2 2 2-2 2 2 2-2M1903 376l2-2 2 2 2-2 2 2 2-2" fill="none" stroke="#d02020"/>
<text x="1908" y="399" class="m" style="fill:#2040c0;font-size:10px;font-weight:bold">RSI</text>
<text x="1908" y="424" class="m" style="fill:#c02020;font-size:15px;font-weight:bold">S</text>
<path d="M1908 434l3 4h-6zM1908 450l3-4h-6zM1900 442l4-3v6zM1916 442l-4-3v6z" fill="#1050c0"/><rect x="1906" y="440" width="4" height="4" fill="#1050c0"/>
<path d="M1901 472l10-11 3 3-10 11-4 1z" fill="#f0a030" stroke="#a06020" stroke-width=".8"/>
<text x="1908" y="500" class="m" style="fill:#1060c0;font-size:10px">Fs</text><circle cx="1908" cy="518" r="4.5" fill="#40b040"/>
<rect x="1913" y="537" width="5" height="53" rx="2" fill="#222" stroke="#888"/><rect x="1914" y="580" width="3" height="10" fill="#40e0d0"/>
<rect x="1897" y="645" width="22" height="22" fill="#fff"/>
<g class="sb"><text x="1907" y="546" style="font-size:13px">1</text><text x="1907" y="569" style="font-size:13px">5</text><text x="1907" y="592" style="font-size:13px">15</text><text x="1908" y="615" style="font-size:13px">30</text><text x="1908" y="638" style="font-size:13px">60</text><text x="1908" y="662">日</text><text x="1908" y="684">周</text><text x="1908" y="707">月</text><text x="1908" y="730" style="font-size:13px">N</text><text x="1908" y="753">多</text><text x="1908" y="777">季</text><text x="1908" y="799">年</text></g>
</svg>
</body></html>
